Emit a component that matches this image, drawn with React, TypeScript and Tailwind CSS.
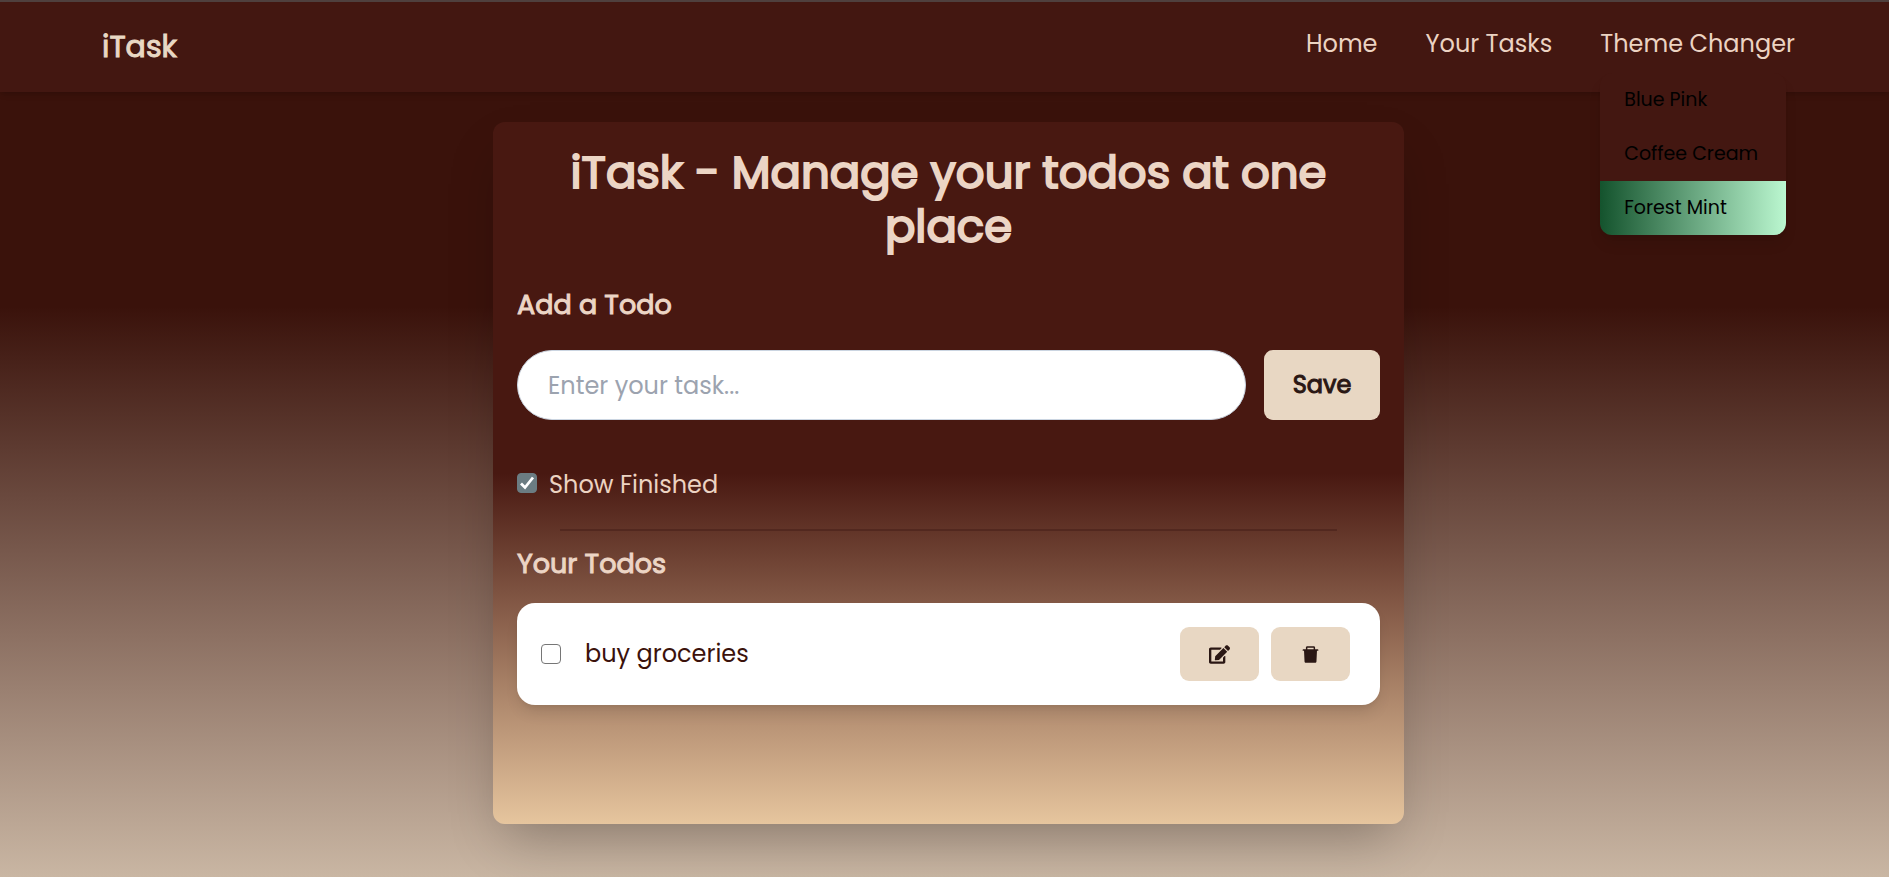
import { useState } from "react";
import { FaEdit } from "react-icons/fa";
import { AiFillDelete } from "react-icons/ai";

const themes = ["Blue Pink", "Coffee Cream", "Forest Mint"];

function Navbar() {
  return (
    <nav className="relative z-10 flex h-[92px] items-start justify-between border-t-2 border-[#4f403e] bg-[#431711] pr-[94px] pl-[102px] shadow-md">
      <a href="#" className="mt-6 text-[30px] leading-[42px] text-[#e9d8c4] [-webkit-text-stroke:1px]">iTask</a>
      <ul className="mt-6 flex gap-12 text-2xl leading-9 text-[#ecd3c2]">
        <li><a href="#home">Home</a></li>
        <li><a href="#tasks">Your Tasks</a></li>
        <li className="relative">
          <button type="button">Theme Changer</button>
          <div className="absolute top-[47px] left-0 flex w-[186px] flex-col overflow-hidden rounded-xl bg-[#431711] text-[19px] text-black shadow-lg">
            {themes.map((t) => (
              <button
                key={t}
                type="button"
                className="h-[54px] px-6 text-left whitespace-nowrap last:bg-linear-to-r/srgb last:from-[#14532d] last:to-[#bbf7d0]"
              >
                {t}
              </button>
            ))}
          </div>
        </li>
      </ul>
    </nav>
  );
}

function Checkbox({ checked, onToggle }: { checked: boolean; onToggle: () => void }) {
  return (
    <span className="grid size-5 place-items-center">
      <input
        type="checkbox"
        checked={checked}
        onChange={onToggle}
        className="col-start-1 row-start-1 size-full appearance-none rounded border border-[#767676] bg-white checked:border-[#6b7c82] checked:bg-[#6b7c82]"
      />
      {checked && (
        <svg viewBox="0 0 20 20" className="pointer-events-none col-start-1 row-start-1 size-full" aria-hidden="true">
          <path d="M4 10.5 8 14.5l8-10" fill="none" stroke="#fff" strokeWidth="2.8" />
        </svg>
      )}
    </span>
  );
}

function TodoItem({ text }: { text: string }) {
  const [done, setDone] = useState(false);
  const action = "flex h-[54px] w-[79px] items-center justify-center rounded-[9px] bg-[#e8d7c3] text-[#2a1714]";
  return (
    <li className="flex h-[102px] items-center rounded-[18px] bg-white pr-[30px] pl-6 shadow-lg">
      <label className="flex flex-1 items-center gap-6 text-2xl text-[#3b120b]">
        <Checkbox checked={done} onToggle={() => setDone(!done)} />
        {text}
      </label>
      <div className="flex gap-3">
        <button type="button" aria-label="Edit" className={action}><FaEdit size={21} /></button>
        <button type="button" aria-label="Delete" className={action}><AiFillDelete size={21} /></button>
      </div>
    </li>
  );
}

export default function App() {
  const [showFinished, setShowFinished] = useState(true);
  const subheading = "text-[27px] leading-[38px] text-[#ecd5c5] [-webkit-text-stroke:1px]";
  return (
    <div className="min-h-screen bg-linear-to-b/srgb from-[#3a120b] from-35% to-[#c9b6a3] font-[Poppins,Inter,sans-serif]">
      <Navbar />
      <div className="flex justify-center pt-[30px] pl-2">
        <main className="min-h-[702px] w-[911px] max-w-full rounded-xl bg-linear-to-b/srgb from-[#481811] from-50% to-[#e6c59e] px-6 pt-6 shadow-2xl">
          <h1 className="text-center text-[45px] leading-[54px] text-[#ecd5c5] [-webkit-text-stroke:2px]">
            iTask - Manage your todos at one place
          </h1>
          <h2 className={`mt-8 ${subheading}`}>Add a Todo</h2>
          <form className="mt-[26px] flex gap-[18px]" onSubmit={(e) => e.preventDefault()}>
            <input
              type="text"
              aria-label="Task"
              placeholder="Enter your task..."
              className="h-[70px] min-w-0 flex-1 rounded-full border border-[#cbd5e1] bg-white px-[30px] text-2xl placeholder:text-[#9ca3af]"
            />
            <button type="submit" className="w-[116px] rounded-[9px] bg-[#e8d7c3] text-2xl text-[#2a1714] [-webkit-text-stroke:1px]">Save</button>
          </form>
          <label className="mt-[47px] flex items-start gap-3 text-2xl leading-9 text-[#ecd3c2]">
            <span className="pt-[6px]">
              <Checkbox checked={showFinished} onToggle={() => setShowFinished(!showFinished)} />
            </span>
            Show Finished
          </label>
          <hr className="mx-auto mt-[26px] w-[90%] border-t-2 border-[#52281f]" />
          <h2 className={`mt-[14px] ${subheading}`}>Your Todos</h2>
          <ul className="mt-5">
            <TodoItem text="buy groceries" />
          </ul>
        </main>
      </div>
    </div>
  );
}
